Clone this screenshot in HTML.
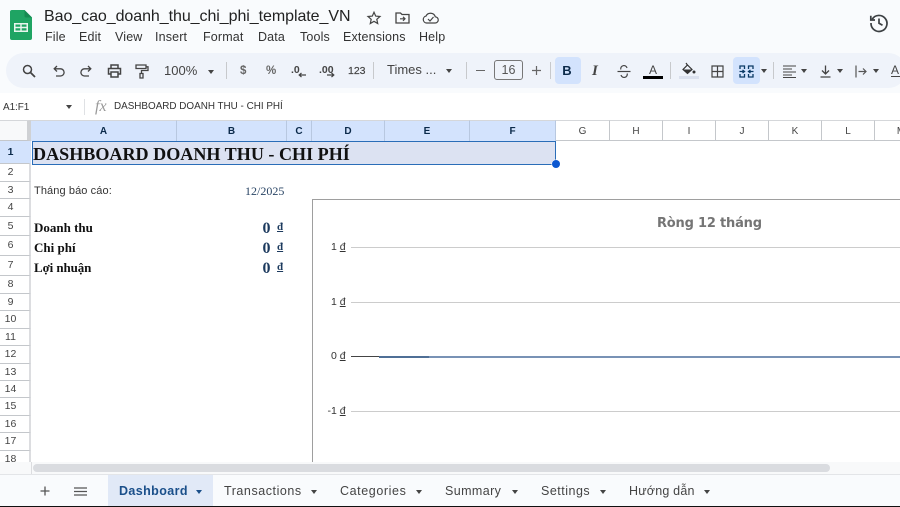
<!DOCTYPE html>
<html><head><meta charset="utf-8">
<style>
html,body{margin:0;padding:0;width:900px;height:507px;overflow:hidden;background:#fff}
body{position:relative;font-family:"Liberation Sans",sans-serif;color:#444;filter:blur(.25px)}
.a{position:absolute;white-space:nowrap}
.menu{top:29px;font-size:12.5px;color:#333;line-height:16px;letter-spacing:.15px}
.tb{top:63px;font-size:12px;color:#444;line-height:16px}
.sep{position:absolute;top:62px;width:1px;height:17px;background:#c7c9cc}
.ch{position:absolute;top:120px;height:21px;line-height:21px;text-align:center;font-size:10px;box-sizing:border-box;border-right:1px solid #c4c7cb;border-top:1px solid #d5d7da;border-bottom:1px solid #c4c7cb;color:#444;background:#fff}
.ch.s{background:#d3e3fd;color:#0b2a4a;font-weight:bold;border-right-color:#b8c8e0;border-bottom:0}
.rh{position:absolute;left:0;width:31px;box-sizing:border-box;text-align:center;font-size:10.5px;color:#444;border-bottom:1px solid #c4c7cb;border-right:2px solid #dcdde0;background:#fff;padding-right:8px}
.tab{position:absolute;top:482px;font-size:12.5px;color:#444;line-height:18px;letter-spacing:.5px}
.car{position:absolute;width:0;height:0;border-left:3.5px solid transparent;border-right:3.5px solid transparent;border-top:4px solid #444}
svg{position:absolute;overflow:visible}
.ser{font-family:"Liberation Serif",serif}
</style></head><body>

<!-- top chrome -->
<div class="a" style="left:0;top:0;width:900px;height:93px;background:#f9fbfd"></div>

<!-- logo -->
<svg style="left:10px;top:10px" width="22" height="30" viewBox="0 0 22 30"><path d="M2 0H14.5L22 7.5V28a2 2 0 0 1-2 2H2a2 2 0 0 1-2-2V2a2 2 0 0 1 2-2z" fill="#1fa463"/><path d="M14.5 0L22 7.5H16a1.500 1.500 0 0 1-1.500-1.500z" fill="#158a52"/><path d="M4 13H18V22H4zM5.500 14.500V16.800H10.300V14.500zM11.700 14.500V16.800H16.500V14.500zM5.500 18.200V20.500H10.300V18.200zM11.700 18.200V20.500H16.500V18.200z" fill="#e8f5ee" fill-rule="evenodd"/></svg>

<div class="a" style="left:44px;top:7px;font-size:16px;line-height:20px;color:#222;letter-spacing:-.06px">Bao_cao_doanh_thu_chi_phi_template_VN</div>
<svg style="left:367px;top:11px" width="14" height="14" viewBox="0 0 14 14"><path d="M7 1.200L8.700 5.100L13 5.500L9.800 8.300L10.700 12.500L7 10.300L3.300 12.500L4.200 8.300L1 5.500L5.300 5.100z" fill="none" stroke="#444" stroke-width="1.200"/></svg>
<svg style="left:395px;top:11px" width="15" height="13" viewBox="0 0 15 13"><path d="M1 2H5.500L7 3.500H14V12H1z" fill="none" stroke="#444" stroke-width="1.300"/><path d="M5 7.800H10M8 5.800L10 7.800L8 9.800" fill="none" stroke="#444" stroke-width="1.200"/></svg>
<svg style="left:422px;top:11px" width="17" height="13" viewBox="0 0 17 13"><path d="M4.500 12A3.500 3.500 0 0 1 4 5.100A5 5 0 0 1 13.300 5.800A3.100 3.100 0 0 1 13 12z" fill="none" stroke="#444" stroke-width="1.200"/><path d="M6 8L8 10L11.500 6" fill="none" stroke="#444" stroke-width="1.200"/></svg>

<div class="a menu" style="left:45px">File</div>
<div class="a menu" style="left:79px">Edit</div>
<div class="a menu" style="left:115px">View</div>
<div class="a menu" style="left:155px">Insert</div>
<div class="a menu" style="left:203px">Format</div>
<div class="a menu" style="left:258px">Data</div>
<div class="a menu" style="left:300px">Tools</div>
<div class="a menu" style="left:343px">Extensions</div>
<div class="a menu" style="left:419px">Help</div>

<!-- history -->
<svg style="left:869px;top:13px" width="20" height="20" viewBox="0 0 20 20"><path d="M3.200 6.200A8 8 0 1 1 2 10" fill="none" stroke="#3c4043" stroke-width="1.700"/><path d="M1.800 2.800V7H6" fill="none" stroke="#3c4043" stroke-width="1.700"/><path d="M10 5.500V10.300L13.500 12.300" fill="none" stroke="#3c4043" stroke-width="1.700"/></svg>

<!-- toolbar -->
<div class="a" style="left:6px;top:53px;width:900px;height:35px;border-radius:18px;background:#eff3fa"></div>

<svg style="left:22px;top:64px" width="14" height="14" viewBox="0 0 14 14"><circle cx="5.500" cy="5.500" r="4" fill="none" stroke="#444" stroke-width="1.500"/><path d="M8.500 8.500L13 13" stroke="#444" stroke-width="1.800"/></svg>
<svg style="left:53px;top:65px" width="12" height="13" viewBox="0 0 12 13"><path d="M4 1L1.200 3.800L4 6.500M1.500 3.800H7.500A3.600 3.600 0 0 1 7.500 11H3" fill="none" stroke="#444" stroke-width="1.300"/></svg>
<svg style="left:80px;top:65px" width="12" height="13" viewBox="0 0 12 13"><path d="M8 1L10.800 3.800L8 6.500M10.500 3.800H4.500A3.600 3.600 0 0 0 4.500 11H9" fill="none" stroke="#444" stroke-width="1.300"/></svg>
<svg style="left:107px;top:64px" width="15" height="14" viewBox="0 0 15 14"><path d="M4 4V1H11V4M4 10H1.500V4.500H13.500V10H11M4 8H11V13H4z" fill="none" stroke="#444" stroke-width="1.500"/></svg>
<svg style="left:135px;top:64px" width="14" height="15" viewBox="0 0 14 15"><path d="M1 1H11V4.500H1zM11 2.800H13V6.500H6.500V9.500M5 9.500H8V14H5z" fill="none" stroke="#444" stroke-width="1.300"/></svg>

<div class="a tb" style="left:164px;font-size:13px">100%</div>
<div class="car" style="left:208px;top:70px"></div>
<div class="sep" style="left:226px"></div>
<div class="a tb" style="left:240px;font-size:11.500px;font-weight:bold;color:#666">$</div>
<div class="a tb" style="left:266px;font-size:11.500px;font-weight:bold;color:#666">%</div>
<div class="a tb" style="left:291px;font-size:10.500px;font-weight:bold;color:#444;top:62px">.0</div>
<svg style="left:298px;top:72px" width="9" height="6" viewBox="0 0 9 6"><path d="M8 3H1.500M3.500 1L1.200 3L3.500 5" fill="none" stroke="#444" stroke-width="1.200"/></svg>
<div class="a tb" style="left:319px;font-size:10.500px;font-weight:bold;color:#444;top:62px">.00</div>
<svg style="left:326px;top:72px" width="9" height="6" viewBox="0 0 9 6"><path d="M1 3H7.500M5.500 1L7.800 3L5.500 5" fill="none" stroke="#444" stroke-width="1.200"/></svg>
<div class="a tb" style="left:348px;font-size:10.500px;color:#444;-webkit-text-stroke:.2px #444">123</div>
<div class="sep" style="left:373px"></div>
<div class="a tb" style="left:387px;font-size:13px;top:62px">Times ...</div>
<div class="car" style="left:446px;top:69px"></div>
<div class="sep" style="left:466px"></div>
<div class="a" style="left:476px;top:70px;width:9px;height:1.200px;background:#666"></div>
<div class="a" style="left:494px;top:60px;width:29px;height:20px;box-sizing:border-box;border:1px solid #777;border-radius:3px;text-align:center;font-size:12.500px;line-height:19px;color:#555">16</div>
<svg style="left:531px;top:65px" width="11" height="11" viewBox="0 0 11 11"><path d="M5.500 1V10M1 5.500H10" stroke="#666" stroke-width="1.200"/></svg>
<div class="sep" style="left:550px"></div>

<div class="a" style="left:555px;top:57px;width:26px;height:27px;border-radius:4px;background:#d3e3fd"></div>
<div class="a" style="left:554px;top:62px;width:26px;text-align:center;font-size:13px;font-weight:bold;color:#0b2a4a;line-height:18px">B</div>
<div class="a" style="left:592px;top:62px;font-size:15px;font-style:italic;font-weight:bold;color:#444;line-height:18px;font-family:'Liberation Serif',serif">I</div>
<svg style="left:617px;top:65px" width="14" height="13" viewBox="0 0 14 13"><path d="M0.500 6.500H13.500" stroke="#444" stroke-width="1.200"/><path d="M3.800 4.500A3 3 0 0 1 10 3M10.200 8.500A3 3 0 0 1 4 10" fill="none" stroke="#444" stroke-width="1.200"/></svg>
<div class="a" style="left:643px;top:62px;width:20px;text-align:center;font-size:12px;color:#444;line-height:16px">A</div>
<div class="a" style="left:643px;top:76px;width:20px;height:3px;background:#000"></div>
<div class="sep" style="left:670px"></div>
<svg style="left:681px;top:62px" width="15" height="14" viewBox="0 0 15 14"><path d="M5 1L6.500 3.200M6.500 3L11 7.500L6.500 11.500L2 7.500z" fill="none" stroke="#333" stroke-width="1.200"/><path d="M2.500 7.500H10.500L6.500 11.500z" fill="#333"/><circle cx="13" cy="10" r="1.500" fill="#333"/></svg>
<div class="a" style="left:679px;top:76px;width:20px;height:3px;background:#dbe1ee"></div>
<svg style="left:711px;top:65px" width="13" height="13" viewBox="0 0 13 13"><path d="M1 1H12V12H1zM6.500 1V12M1 6.500H12" fill="none" stroke="#444" stroke-width="1.200"/></svg>

<div class="a" style="left:733px;top:57px;width:27px;height:27px;border-radius:4px;background:#d3e3fd"></div>
<svg style="left:739px;top:65px" width="15" height="13" viewBox="0 0 15 13"><path d="M1 4V1H5.500V4M9.500 4V1H14V4M1 9V12H5.500V9M9.500 9V12H14V9M0.500 6.500H5M3.500 5L5.500 6.500L3.500 8M14.500 6.500H10M11.500 5L9.500 6.500L11.500 8" fill="none" stroke="#0b3a66" stroke-width="1.300"/></svg>
<div class="car" style="left:761px;top:69px"></div>
<div class="sep" style="left:773px"></div>
<svg style="left:783px;top:65px" width="13" height="13" viewBox="0 0 13 13"><path d="M0 1H13M0 4H9M0 7H13M0 10H9M0 12.500H13" fill="none" stroke="#444" stroke-width="1.100"/></svg>
<div class="car" style="left:801px;top:69px"></div>
<svg style="left:820px;top:65px" width="11" height="13" viewBox="0 0 11 13"><path d="M5.500 0.500V9M2 5.500L5.500 9L9 5.500M0.500 12H10.500" fill="none" stroke="#444" stroke-width="1.300"/></svg>
<div class="car" style="left:837px;top:69px"></div>
<svg style="left:855px;top:65px" width="12" height="13" viewBox="0 0 12 13"><path d="M1 0.500V12.500M3.500 6.500H10.500M8 3.500L11 6.500L8 9.500" fill="none" stroke="#555" stroke-width="1.200"/></svg>
<div class="car" style="left:873px;top:69px"></div>
<div class="a" style="left:891px;top:62px;font-size:12px;color:#444;line-height:16px">A</div>
<div class="a" style="left:891px;top:76px;width:9px;height:1.200px;background:#444"></div>

<!-- formula bar -->
<div class="a" style="left:3px;top:101px;font-size:10px;color:#333;line-height:14px;letter-spacing:-.1px">A1:F1</div>
<div class="car" style="left:66px;top:105px"></div>
<div class="a" style="left:84px;top:99px;width:1px;height:16px;background:#dfe1e4"></div>
<div class="a ser" style="left:95px;top:99px;font-size:16px;font-style:italic;color:#999;line-height:16px">fx</div>
<div class="a" style="left:114px;top:100px;font-size:9.900px;color:#333;line-height:14px">DASHBOARD DOANH THU - CHI PHÍ</div>

<!-- headers -->
<div class="a" style="left:0;top:120px;width:31px;height:21px;background:#f8f9fa;border-top:1px solid #d5d7da;box-sizing:border-box;border-right:4px solid #cfd1d4;border-bottom:1px solid #c4c7cb"></div>
<div class="ch s" style="left:31px;width:146px">A</div>
<div class="ch s" style="left:177px;width:110px">B</div>
<div class="ch s" style="left:287px;width:25px">C</div>
<div class="ch s" style="left:312px;width:73px">D</div>
<div class="ch s" style="left:385px;width:85px">E</div>
<div class="ch s" style="left:470px;width:86px">F</div>
<div class="ch" style="left:556px;width:54px">G</div>
<div class="ch" style="left:610px;width:53px">H</div>
<div class="ch" style="left:663px;width:53px">I</div>
<div class="ch" style="left:716px;width:53px">J</div>
<div class="ch" style="left:769px;width:53px">K</div>
<div class="ch" style="left:822px;width:53px">L</div>
<div class="ch" style="left:875px;width:53px">M</div>

<div class="rh" style="top:141px;height:23px;line-height:22px;background:#d3e3fd;color:#0b2a4a;font-weight:bold;border-right-color:#d3e3fd">1</div>
<div class="rh" style="top:164px;height:18px;line-height:17px">2</div>
<div class="rh" style="top:182px;height:17px;line-height:16px">3</div>
<div class="rh" style="top:199px;height:18px;line-height:17px">4</div>
<div class="rh" style="top:217px;height:19px;line-height:18px">5</div>
<div class="rh" style="top:236px;height:20px;line-height:19px">6</div>
<div class="rh" style="top:256px;height:20px;line-height:19px">7</div>
<div class="rh" style="top:276px;height:18px;line-height:17px">8</div>
<div class="rh" style="top:294px;height:17px;line-height:16px">9</div>
<div class="rh" style="top:311px;height:18px;line-height:17px">10</div>
<div class="rh" style="top:329px;height:17px;line-height:16px">11</div>
<div class="rh" style="top:346px;height:18px;line-height:17px">12</div>
<div class="rh" style="top:364px;height:17px;line-height:16px">13</div>
<div class="rh" style="top:381px;height:17px;line-height:16px">14</div>
<div class="rh" style="top:398px;height:18px;line-height:17px">15</div>
<div class="rh" style="top:416px;height:17px;line-height:16px">16</div>
<div class="rh" style="top:433px;height:18px;line-height:17px">17</div>
<div class="rh" style="top:451px;height:12px;line-height:16px;border-bottom:0;overflow:hidden">18</div>

<!-- selection -->
<div class="a" style="left:32px;top:141px;width:524px;height:24px;box-sizing:border-box;background:#dce2f2;border:1px solid #2a6db8;border-width:1px 1.500px 1.500px 1px"></div>
<div class="a ser" style="left:33px;top:143px;font-size:18.100px;font-weight:bold;color:#111;line-height:22px">DASHBOARD DOANH THU - CHI PHÍ</div>
<div class="a" style="left:552px;top:160px;width:8px;height:8px;border-radius:50%;background:#0b57d0;box-shadow:0 0 0 .5px #fff"></div>

<!-- cells -->
<div class="a" style="left:34px;top:184px;font-size:11px;line-height:15px;color:#333;letter-spacing:.1px">Tháng báo cáo:</div>
<div class="a ser" style="left:245px;top:184px;font-size:12px;line-height:15px;color:#2a4565">12/2025</div>

<div class="a ser" style="left:34px;top:220px;font-size:13px;font-weight:bold;color:#111;line-height:16px">Doanh thu</div>
<div class="a ser" style="left:34px;top:240px;font-size:13px;font-weight:bold;color:#111;line-height:16px">Chi phí</div>
<div class="a ser" style="left:34px;top:260px;font-size:13px;font-weight:bold;color:#111;line-height:16px;letter-spacing:-.1px">Lợi nhuận</div>

<div class="a ser" style="left:262.500px;top:220px;font-size:16px;font-weight:bold;color:#1c3a5e;line-height:17px">0</div>
<div class="a ser" style="left:262.500px;top:240px;font-size:16px;font-weight:bold;color:#1c3a5e;line-height:17px">0</div>
<div class="a ser" style="left:262.500px;top:260px;font-size:16px;font-weight:bold;color:#1c3a5e;line-height:17px">0</div>
<div class="a ser" style="left:277px;top:221px;font-size:11px;font-weight:bold;color:#1c3a5e;line-height:13px;text-decoration:underline">đ</div>
<div class="a ser" style="left:277px;top:241px;font-size:11px;font-weight:bold;color:#1c3a5e;line-height:13px;text-decoration:underline">đ</div>
<div class="a ser" style="left:277px;top:261px;font-size:11px;font-weight:bold;color:#1c3a5e;line-height:13px;text-decoration:underline">đ</div>

<!-- chart -->
<div class="a" style="left:312px;top:199px;width:600px;height:264px;box-sizing:border-box;border:1px solid #9e9e9e;background:#fff"></div>
<div class="a" style="left:657px;top:214px;font-family:'DejaVu Sans',sans-serif;font-size:13px;font-weight:bold;color:#757575;line-height:20px;letter-spacing:-.2px">Ròng 12 tháng</div>

<div class="a" style="left:331px;top:241px;font-size:10.500px;color:#333;line-height:13px">1 <u>đ</u></div>
<div class="a" style="left:331px;top:296px;font-size:10.500px;color:#333;line-height:13px">1 <u>đ</u></div>
<div class="a" style="left:331px;top:350px;font-size:10.500px;color:#333;line-height:13px">0 <u>đ</u></div>
<div class="a" style="left:327.500px;top:405px;font-size:10.500px;color:#333;line-height:13px">-1 <u>đ</u></div>
<div class="a" style="left:351px;top:247px;width:549px;height:1px;background:#ccc"></div>
<div class="a" style="left:351px;top:302px;width:549px;height:1px;background:#ccc"></div>
<div class="a" style="left:351px;top:356px;width:28px;height:1px;background:#444"></div>
<div class="a" style="left:379px;top:356px;width:521px;height:2px;background:#7892b5"></div>
<div class="a" style="left:379px;top:356px;width:50px;height:2px;background:#4f6f96"></div>
<div class="a" style="left:351px;top:411px;width:549px;height:1px;background:#ccc"></div>

<!-- scrollbar -->
<div class="a" style="left:0;top:462px;width:900px;height:12px;background:#f8f9fa"></div>
<div class="a" style="left:31px;top:462px;width:1px;height:12px;background:#dcdde0"></div>
<div class="a" style="left:33px;top:464px;width:797px;height:8px;border-radius:4px;background:#dadce0"></div>
<div class="a" style="left:0;top:474px;width:900px;height:1px;background:#e3e5e8"></div>

<!-- tabs -->
<div class="a" style="left:0;top:475px;width:900px;height:31px;background:#f9fbfd"></div>
<div class="a" style="left:0;top:506px;width:900px;height:1px;background:#111"></div>
<svg style="left:40px;top:486px" width="10" height="10" viewBox="0 0 10 10"><path d="M5 0.500V9.500M0.500 5H9.500" stroke="#555" stroke-width="1.300"/></svg>
<svg style="left:74px;top:487px" width="13" height="9" viewBox="0 0 13 9"><path d="M0 1H13M0 4.500H13M0 8H13" stroke="#555" stroke-width="1.200"/></svg>

<div class="a" style="left:108px;top:475px;width:105px;height:31px;background:#e1e9f7"></div>
<div class="tab" style="left:119px;color:#1a4f8a;font-weight:bold;letter-spacing:.4px">Dashboard</div>
<div class="car" style="left:196px;top:490px;border-top-color:#1a4f8a"></div>
<div class="tab" style="left:224px;letter-spacing:.55px">Transactions</div>
<div class="car" style="left:311px;top:490px"></div>
<div class="tab" style="left:340px;letter-spacing:.6px">Categories</div>
<div class="car" style="left:416px;top:490px"></div>
<div class="tab" style="left:445px;letter-spacing:.4px">Summary</div>
<div class="car" style="left:512px;top:490px"></div>
<div class="tab" style="left:541px">Settings</div>
<div class="car" style="left:600px;top:490px"></div>
<div class="tab" style="left:629px;letter-spacing:.2px">Hướng dẫn</div>
<div class="car" style="left:704px;top:490px"></div>

</body></html>
